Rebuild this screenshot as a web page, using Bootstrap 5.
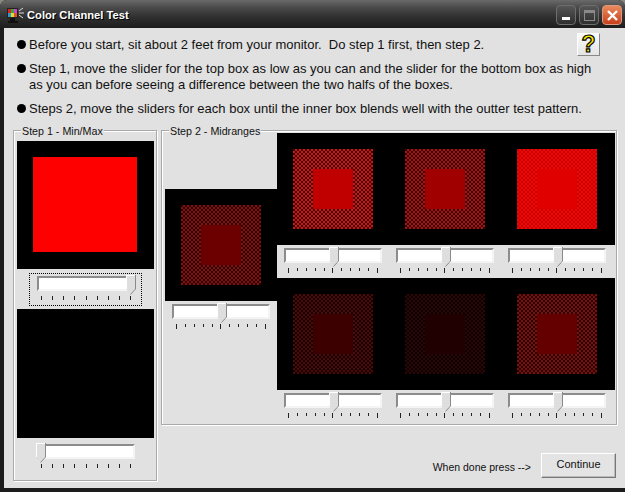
<!DOCTYPE html>
<html lang="en">
<head>
  <meta charset="UTF-8">
  <title>Color Channel Test</title>
  <link href="https://cdn.jsdelivr.net/npm/bootstrap@5.3.0/dist/css/bootstrap.min.css" rel="stylesheet">
  <style>
    html, body { margin: 0; background: #8a8a80; }
    body { font-family: "Liberation Sans", Arial, sans-serif; color: #111; overflow: hidden; }
    .win { width: 625px; height: 492px; background: #1c1c1c; border-radius: 7px 7px 0 0; padding: 0 0 4px 4px; }
    .tbar { height: 28px; margin-left: -4px; padding: 2px 3px 0 7px; border-radius: 7px 7px 0 0;
      background: linear-gradient(#6a6a6a 0, #4c4c4c 25%, #303030 60%, #1d1d1d 100%); }
    .tlabel { color: #fff; font-size: 11.2px; font-weight: 700; margin-left: 3px; padding-top: 1px; text-shadow: 1px 1px 0 #000; }
    .tbtns { gap: 3px; }
    .tbtn { width: 20px; height: 20px; border-radius: 4px; border: 1px solid #6e6e6e; background: linear-gradient(#565656, #2e2e2e); }
    .tbtn-x { background: linear-gradient(#ea8a5c, #c8401c); border-color: #d89a80; }
    .pane { background: #e1e1e1; height: 460px; padding: 9px 0 0 9px; }
    .notes { font-size: 13px; line-height: 16px; padding-left: 4px; height: 93px; }
    .notes-txt { flex: 1 1 0; min-width: 0; }
    .note { padding-left: 12px; margin-bottom: 8px; position: relative; white-space: nowrap; }
    .note::before { content: ""; position: absolute; left: 0; top: 3px; width: 9px; height: 9px; border-radius: 50%; background: #000; }
    .help { width: 23px; height: 23px; background: linear-gradient(#fafafa, #e4e4e4); border: 1px solid; border-color: #fff #888 #888 #fff;
      font: 700 23px/21px "Liberation Sans", sans-serif; color: #f4e800; -webkit-text-stroke: 1.2px #000; text-align: center; margin: -4px 25px 0 0; }
    .grp { border: 1px solid #a9a9a9; box-shadow: 1px 1px 0 #fff, inset 1px 1px 0 #fff; position: relative; }
    .grp-a { width: 144px; height: 351px; padding: 10px 0 0 3px; }
    .grp-b { width: 456px; height: 295px; padding: 2px 0 0 3px; }
    .grp-cap { position: absolute; left: 7px; top: -7px; background: #e1e1e1; padding: 0 1px; font-size: 10.7px; line-height: 14px; }
    .blk { background: #000; }
    .blk-a1 { width: 137px; height: 128px; padding: 16px 0 0 16px; }
    .blk-a2 { width: 137px; height: 129px; }
    .fill-red { width: 104px; height: 95px; background: #fe0000; }
    .cell { width: 112px; }
    .left-gap { height: 56px; }
    .swatch { width: 112px; height: 112px; background: #000; padding: 16px; }
    .chk { width: 80px; height: 80px; padding: 20px; }
    .inbox { width: 40px; height: 40px; }
    .mband { background: #000; width: 338px; }
    .sld-row { height: 33px; }
    .sld { position: relative; width: 98px; height: 26px; }
    .trk { height: 15px; background: #fff; border: 2px solid; border-color: #8c8c8c #f4f4f4 #f4f4f4 #8c8c8c; }
    .thumb { position: absolute; top: -1px; }
    .ticks { margin: 5px 4px 0 4px; }
    .ticks span { width: 1px; height: 4px; background: #222; }
    .ticks-mid span { height: 3px; }
    .ticks-mid span:first-child, .ticks-mid span:last-child, .ticks-mid span:nth-child(6) { height: 5px; }
    .sld-box { padding-top: 3px; padding-left: 7px; }
    .focus-box { width: 113px; height: 33px; margin: 4px 0 3px 12px; padding: 2px 0 0 7px; border: 1px dotted #000; }
    .bottom-sld { padding: 6px 0 0 20px; }
    .foot { font-size: 10.5px; margin-top: 28px; padding-right: 1px; }
    .foot-txt { margin-right: 2px; padding-bottom: 2px; }
    .cont { width: 75px; height: 25px; background: #e4e4e4; border: 1px solid; border-color: #fff #777 #777 #fff; box-shadow: inset -1px -1px 0 #bbb; font-size: 11px; padding: 0 0 2px; color: #111; border-radius: 0; }
  </style>
</head>
<body>
  <div class="win d-flex flex-column">
    <!-- Title bar -->
    <div class="tbar d-flex align-items-center">
      <svg width="17" height="19" viewBox="0 0 17 19">
        <rect x="0" y="2" width="11" height="10" fill="#222"/>
        <rect x="1" y="3" width="3" height="4" fill="#d22"/><rect x="4" y="3" width="3" height="4" fill="#3a3"/><rect x="7" y="3" width="3" height="4" fill="#c4c"/>
        <rect x="1" y="7" width="3" height="4" fill="#39c"/><rect x="4" y="7" width="3" height="4" fill="#dd3"/><rect x="7" y="7" width="3" height="4" fill="#d52"/>
        <path d="M3 12h5v3h3v2H1v-2h2z" fill="#111"/>
        <path d="M12 5l4-3M12 7h5M12 9l4 3" stroke="#ddd" fill="none"/>
      </svg>
      <span class="tlabel">Color Channel Test</span>
      <div class="ms-auto d-flex tbtns">
        <div class="tbtn d-flex justify-content-center align-items-end pb-1"><svg width="8" height="3"><rect width="8" height="3" fill="#fff"/></svg></div>
        <div class="tbtn d-flex justify-content-center align-items-center"><svg width="11" height="11"><rect x=".5" y=".5" width="10" height="10" fill="none" stroke="#8a8a8a"/><rect width="11" height="3" fill="#8a8a8a"/></svg></div>
        <div class="tbtn tbtn-x d-flex justify-content-center align-items-center"><svg width="11" height="11"><path d="M1 1l9 9M10 1l-9 9" stroke="#fff" stroke-width="2.4"/></svg></div>
      </div>
    </div>

    <div class="pane">
      <!-- Instructions -->
      <div class="notes d-flex">
        <div class="notes-txt">
          <div class="note">Before you start, sit about 2 feet from your monitor.&nbsp; Do step 1 first, then step 2.</div>
          <div class="note">Step 1, move the slider for the top box as low as you can and the slider for the bottom box as high<br>as you can before seeing a difference between the two halfs of the boxes.</div>
          <div class="note">Steps 2, move the sliders for each box until the inner box blends well with the outter test pattern.</div>
        </div>
        <div class="help flex-shrink-0">?</div>
      </div>

      <div class="d-flex gap-1">
        <!-- Step 1 -->
        <div class="grp grp-a">
          <span class="grp-cap">Step 1 - Min/Max</span>
          <div class="blk blk-a1"><div class="fill-red"></div></div>
          <div class="focus-box" id="sldTop"></div>
          <div class="blk blk-a2"></div>
          <div class="bottom-sld" id="sldBottom"></div>
        </div>

        <div class="d-flex flex-column">
          <!-- Step 2 -->
          <div class="grp grp-b d-flex">
            <span class="grp-cap">Step 2 - Midranges</span>
            <div class="cell" id="leftCell"></div>
            <div id="mids"></div>
          </div>
          <div class="foot d-flex justify-content-end align-items-end gap-2">
            <span class="foot-txt">When done press --&gt;</span>
            <button class="btn cont" type="button">Continue</button>
          </div>
        </div>
      </div>
    </div>
  </div>

  <script src="https://cdn.jsdelivr.net/npm/bootstrap@5.3.0/dist/js/bootstrap.bundle.min.js"></script>
  <script>
    // light check, dark check, inner box
    const leftBox = ['#801212', '#2c0000', '#6c0000'];
    const midBoxes = [
      [['#c01a1a', '#4a0000', '#c00000'], ['#a01616', '#3c0000', '#a00000'], ['#f00808', '#c80000', '#e00000']],
      [['#4a0a0a', '#180000', '#3c0000'], ['#2a0606', '#0c0000', '#200000'], ['#781010', '#280000', '#640000']]
    ];

    function slider(left, count, cls) {
      let ticks = '';
      for (let i = 0; i < count; i++) ticks += '<span></span>';
      return `<div class="sld">
        <div class="trk"></div>
        <svg class="thumb" style="left:${left}px" width="10" height="20" viewBox="0 0 10 20">
          <path d="M0 0H9V14L4.500 19 0 14Z" fill="#dedede"/>
          <path d="M.5 14V.5H9" stroke="#fff" fill="none"/>
          <path d="M9.500 0V14L4.500 19.500" stroke="#8a8a8a" fill="none"/>
        </svg>
        <div class="ticks ${cls} d-flex justify-content-between">${ticks}</div>
      </div>`;
    }

    function swatch(c) {
      return `<div class="swatch">
        <div class="chk" style="background:conic-gradient(${c[0]} 25%, ${c[1]} 0 50%, ${c[0]} 0 75%, ${c[1]} 0) 0 0/4px 4px">
          <div class="inbox" style="background:${c[2]}"></div>
        </div>
      </div>`;
    }

    document.getElementById('sldTop').innerHTML = slider(89, 9, '');
    document.getElementById('sldBottom').innerHTML = slider(-1, 9, '');
    document.getElementById('leftCell').innerHTML =
      '<div class="left-gap"></div>' + swatch(leftBox) +
      '<div class="sld-box">' + slider(45, 11, 'ticks-mid') + '</div>';
    document.getElementById('mids').innerHTML = midBoxes.map(row => `
      <div class="mband d-flex">${row.map(swatch).join('')}</div>
      <div class="d-flex sld-row">${row.map(() => '<div class="cell sld-box">' + slider(45, 11, 'ticks-mid') + '</div>').join('')}</div>
    `).join('');
  </script>
</body>
</html>
